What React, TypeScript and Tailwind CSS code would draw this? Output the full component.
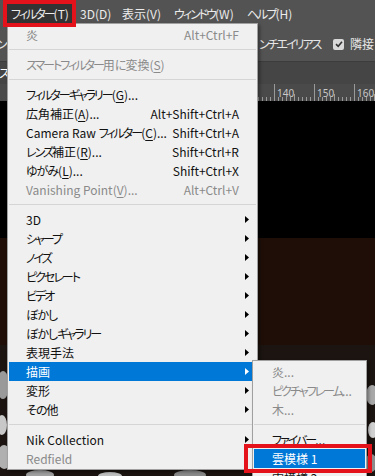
import { type ReactNode } from "react";

const jp = "font-['Meiryo_UI','Noto_Sans_CJK_JP',sans-serif] [font-feature-settings:'palt']";

// Meiryo UI kana are narrow, so tighten kana runs; "&X" marks the underlined mnemonic
function Jp(props: { s: string }) {
  const parts = props.s.split(/(&.|[\u30A0-\u30FF]+|[\u3040-\u309F]+)/).filter(Boolean);
  return (
    <>
      {parts.map((p, i) => {
        if (p.startsWith("&")) return <span key={i} className="underline underline-offset-2">{p.slice(1)}</span>;
        if (/^[\u30A0-\u30FF]/.test(p)) return <span key={i} className="tracking-[-2px]">{p}</span>;
        if (/^[\u3040-\u309F]/.test(p)) return <span key={i} className="tracking-[-1px]">{p}</span>;
        return <span key={i}>{p}</span>;
      })}
    </>
  );
}

type Item =
  | { sep: true }
  | { label: string; shortcut?: string; arrow?: boolean; disabled?: boolean; active?: boolean };

const mainItems: Item[] = [
  { label: "炎", shortcut: "Alt+Ctrl+F", disabled: true },
  { sep: true },
  { label: "スマートフィルター用に変換(&S)", disabled: true },
  { sep: true },
  { label: "フィルターギャラリー(&G)..." },
  { label: "広角補正(&A)...", shortcut: "Alt+Shift+Ctrl+A" },
  { label: "Camera Raw フィルター(&C)...", shortcut: "Shift+Ctrl+A" },
  { label: "レンズ補正(&R)...", shortcut: "Shift+Ctrl+R" },
  { label: "ゆがみ(&L)...", shortcut: "Shift+Ctrl+X" },
  { label: "Vanishing Point(&V)...", shortcut: "Alt+Ctrl+V", disabled: true },
  { sep: true },
  { label: "3D", arrow: true },
  { label: "シャープ", arrow: true },
  { label: "ノイズ", arrow: true },
  { label: "ピクセレート", arrow: true },
  { label: "ビデオ", arrow: true },
  { label: "ぼかし", arrow: true },
  { label: "ぼかしギャラリー", arrow: true },
  { label: "表現手法", arrow: true },
  { label: "描画", arrow: true, active: true },
  { label: "変形", arrow: true },
  { label: "その他", arrow: true },
  { sep: true },
  { label: "Nik Collection", arrow: true },
  { label: "Redfield", disabled: true },
];

const subItems: Item[] = [
  { label: "炎...", disabled: true },
  { label: "ピクチャフレーム...", disabled: true },
  { label: "木...", disabled: true },
  { sep: true },
  { label: "ファイバー..." },
  { label: "雲模様 1", active: true },
  { label: "雲模様 2" },
];

function Arrow(props: { white?: boolean }) {
  return (
    <svg width="4" height="7" viewBox="0 0 4 7" className="shrink-0">
      <polygon points="0,0 4,3.5 0,7" fill={props.white ? "#ffffff" : "#000000"} />
    </svg>
  );
}

function MenuRows(props: { items: Item[]; pl: string; withSlot: boolean }) {
  const { items, pl, withSlot } = props;
  return (
    <>
      {items.map((it, i) => {
        if ("sep" in it) {
          return (
            <div key={i} className="flex h-[11px] items-center">
              <div className="h-px w-full bg-[#d5d5d5]" />
            </div>
          );
        }
        const color = it.active ? "bg-[#0078d7] text-white" : it.disabled ? "text-[#8a8a8a]" : "text-[#111]";
        return (
          <div key={i} className={`flex h-[19px] items-center whitespace-nowrap ${pl} pr-[7px] ${color}`}>
            <span>
              <Jp s={it.label} />
            </span>
            <span className="flex-1" />
            {it.shortcut && <span className="mr-[6px]">{it.shortcut}</span>}
            {withSlot && (it.arrow ? <Arrow white={it.active} /> : <span className="w-[4px]" />)}
          </div>
        );
      })}
    </>
  );
}

function Ruler() {
  const ticks: ReactNode[] = [];
  for (let x = 234; x < 375; x += 4) {
    const major = (x - 274) % 40 === 0;
    const mid = (x - 294) % 40 === 0;
    ticks.push(<line key={x} x1={x + 0.5} x2={x + 0.5} y1={major ? 0 : mid ? 10 : 13} y2={17} stroke="#9a9a9a" strokeWidth="1" />);
  }
  return (
    <svg width="375" height="17" className="block">
      {ticks}
      <text x="277" y="13" fill="#c8c8c8" fontSize="10" fontFamily="Noto Sans, sans-serif">140</text>
      <text x="317" y="13" fill="#c8c8c8" fontSize="10" fontFamily="Noto Sans, sans-serif">150</text>
      <text x="357" y="13" fill="#c8c8c8" fontSize="10" fontFamily="Noto Sans, sans-serif">160</text>
    </svg>
  );
}

function Photo() {
  return (
    <svg width="375" height="131" className="block">
      <rect width="375" height="131" fill="#1b1410" />
      <ellipse cx="3" cy="40" rx="6" ry="14" fill="#9a9a9a" />
      <ellipse cx="2" cy="80" rx="5" ry="10" fill="#c8c8c8" />
      <ellipse cx="4" cy="112" rx="7" ry="12" fill="#b0b0b0" />
      <ellipse cx="372" cy="50" rx="6" ry="10" fill="#a8a8a8" />
      <ellipse cx="373" cy="85" rx="5" ry="8" fill="#d0d0d0" />
      <ellipse cx="371" cy="118" rx="6" ry="9" fill="#8c8c8c" />
      <ellipse cx="40" cy="130" rx="14" ry="5" fill="#a0a0a0" />
      <ellipse cx="110" cy="131" rx="12" ry="4" fill="#c0c0c0" />
      <ellipse cx="190" cy="130" rx="16" ry="5" fill="#8a8a8a" />
      <ellipse cx="300" cy="131" rx="18" ry="4" fill="#b8b8b8" />
    </svg>
  );
}

export default function App() {
  return (
    <div className={`relative h-[476px] w-[375px] overflow-hidden bg-[#535353] text-[12px] ${jp}`}>
      {/* menubar */}
      <div className="flex h-[27px] items-center whitespace-nowrap text-[#ececec]">
        <span className="ml-[7px] flex h-[20px] w-[65px] shrink-0 items-center bg-[#333333] pl-[4px]">
          <Jp s="フィルター(T)" />
        </span>
        <span className="ml-[8px] w-[42px] shrink-0">3D(D)</span>
        <span className="w-[52px] shrink-0">表示(V)</span>
        <span className="w-[73px] shrink-0">
          <Jp s="ウィンドウ(W)" />
        </span>
        <span className="shrink-0">
          <Jp s="ヘルプ(H)" />
        </span>
      </div>
      {/* options bar */}
      <div className="flex h-[35px] items-center whitespace-nowrap border-b border-[#3c3c3c] text-[#e6e6e6]">
        <div className="flex w-[259px] shrink-0">
          <span className="-ml-[3px]">ン</span>
        </div>
        <span className="w-[74px] shrink-0">
          <Jp s="ンチエイリアス" />
        </span>
        <span className="flex h-[11px] w-[11px] shrink-0 items-center justify-center rounded-[2px] bg-[#d9d9d9]">
          <svg width="8" height="8" viewBox="0 0 8 8">
            <path d="M1 4.2 L3.2 6.3 L7 1.8" stroke="#333" strokeWidth="1.6" fill="none" />
          </svg>
        </span>
        <span className="ml-[6px] shrink-0">隣接</span>
      </div>
      {/* tab bar */}
      <div className="flex h-[22px] items-center bg-[#454545] text-white">
        <span className="-ml-[1px]">ス</span>
      </div>
      {/* ruler */}
      <div className="h-[17px] bg-[#4a4a4a]">
        <Ruler />
      </div>
      {/* canvas */}
      <div className="h-[137px] bg-black" />
      <div className="h-[107px] bg-[#1e0e07]" />
      <Photo />

      {/* filter menu */}
      <div className="absolute left-[7px] top-[23px] w-[251px] border border-[#a0a0a0] bg-[#f0f0f0] p-[1px] shadow-[2px_2px_3px_rgba(0,0,0,0.35)]">
        <MenuRows items={mainItems} pl="pl-[17px]" withSlot />
      </div>

      {/* render submenu */}
      <div className="absolute left-[252px] top-[360px] w-[115px] border border-[#a0a0a0] bg-[#f0f0f0] p-[1px] shadow-[2px_2px_3px_rgba(0,0,0,0.35)]">
        <MenuRows items={subItems} pl="pl-[18px]" withSlot={false} />
      </div>

      {/* annotations */}
      <div className="absolute left-[3px] top-0 h-[27px] w-[73px] border-[4px] border-[#e3121b]" />
      <div className="absolute left-[244px] top-[444px] h-[29px] w-[128px] border-[4px] border-[#e3121b]" />
    </div>
  );
}
